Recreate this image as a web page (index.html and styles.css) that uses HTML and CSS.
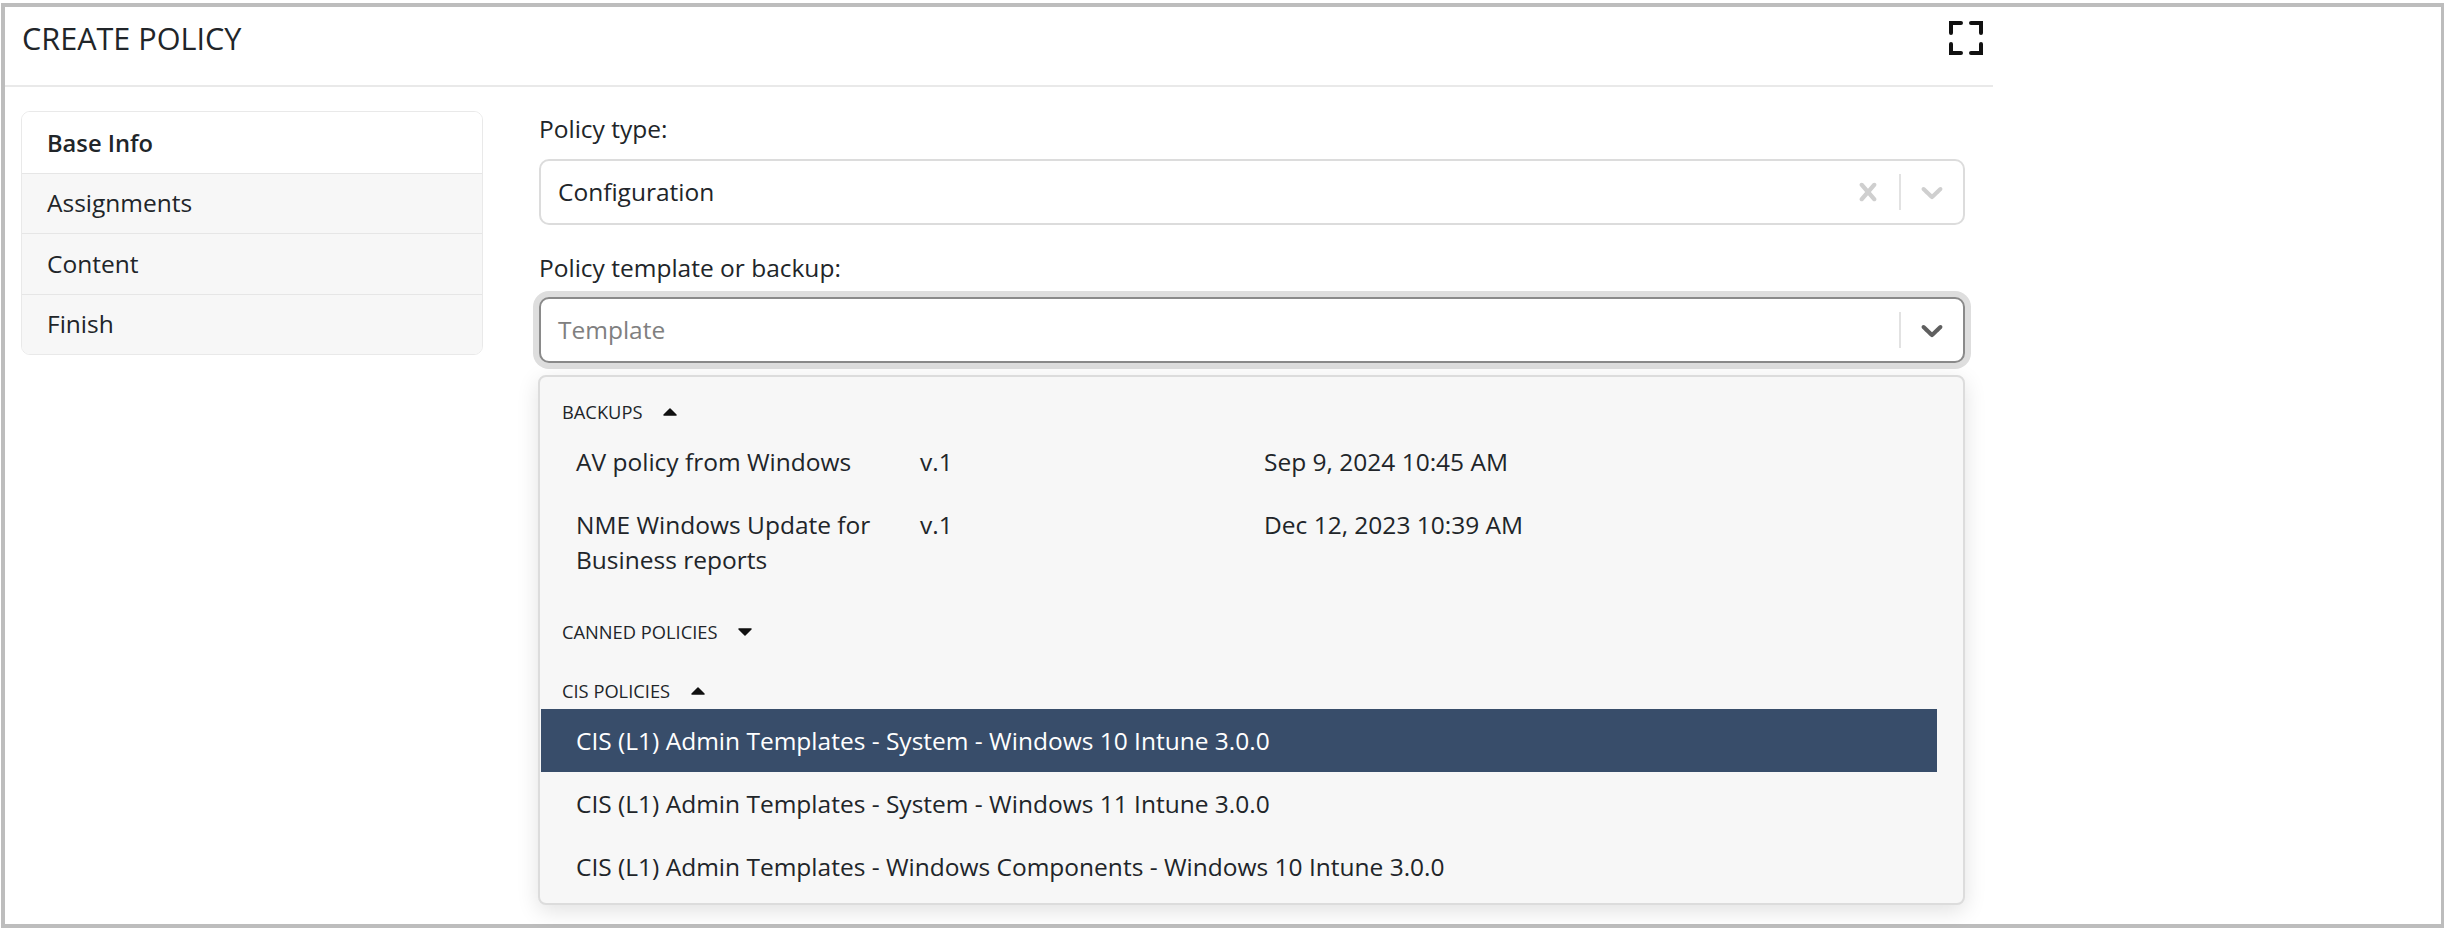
FILE: index.html
```html
<!DOCTYPE html>
<html lang="en">
<head>
<meta charset="utf-8">
<title>Create Policy</title>
<link rel="stylesheet" href="styles.css">
</head>
<body>
<div class="frame">
  <div class="modal">
    <header class="modal-head">
      <h1 class="modal-title">CREATE POLICY</h1>
      <svg class="fullscreen" viewBox="0 0 34 34" aria-hidden="true"><path d="M2 12V2H12M22 2H32V12M2 23V32H12M32 23V32H22"/></svg>
    </header>
    <div class="modal-body">
      <nav class="steps">
        <div class="step step-active">Base Info</div>
        <div class="step">Assignments</div>
        <div class="step">Content</div>
        <div class="step">Finish</div>
      </nav>
      <main class="form">
        <label class="label label-first">Policy type:</label>
        <div class="select">
          <span class="select-value">Configuration</span>
          <svg class="icon icon-muted icon-clear" viewBox="0 0 20 20" aria-hidden="true"><path d="M14.348 14.849c-0.469 0.469-1.229 0.469-1.697 0l-2.651-3.03-2.651 3.029c-0.469 0.469-1.229 0.469-1.697 0-0.469-0.469-0.469-1.229 0-1.697l2.758-3.15-2.759-3.152c-0.469-0.469-0.469-1.228 0-1.697s1.228-0.469 1.697 0l2.652 3.031 2.651-3.031c0.469-0.469 1.228-0.469 1.697 0s0.469 1.229 0 1.697l-2.758 3.152 2.758 3.15c0.469 0.469 0.469 1.229 0 1.698z"/></svg>
          <span class="sep"></span>
          <svg class="icon icon-muted icon-chevron" viewBox="0 0 20 20" aria-hidden="true"><path d="M4.516 7.548c0.436-0.446 1.043-0.481 1.576 0l3.908 3.747 3.908-3.747c0.533-0.481 1.141-0.446 1.574 0 0.436 0.445 0.408 1.197 0 1.615-0.406 0.418-4.695 4.502-4.695 4.502-0.217 0.223-0.502 0.335-0.787 0.335s-0.57-0.112-0.789-0.335c0 0-4.287-4.084-4.695-4.502s-0.436-1.17 0-1.615z"/></svg>
        </div>
        <label class="label label-second">Policy template or backup:</label>
        <div class="select select-focus">
          <span class="select-value select-placeholder">Template</span>
          <span class="sep"></span>
          <svg class="icon icon-dark icon-chevron" viewBox="0 0 20 20" aria-hidden="true"><path d="M4.516 7.548c0.436-0.446 1.043-0.481 1.576 0l3.908 3.747 3.908-3.747c0.533-0.481 1.141-0.446 1.574 0 0.436 0.445 0.408 1.197 0 1.615-0.406 0.418-4.695 4.502-4.695 4.502-0.217 0.223-0.502 0.335-0.787 0.335s-0.57-0.112-0.789-0.335c0 0-4.287-4.084-4.695-4.502s-0.436-1.17 0-1.615z"/></svg>
        </div>
        <div class="menu">
          <div class="group group-backups">
            <span>BACKUPS</span>
            <svg class="caret" viewBox="0 0 14 8" aria-hidden="true"><path d="M7 1L13 7H1Z"/></svg>
          </div>
          <div class="option option-grid"><span>AV policy from Windows</span><span>v.1</span><span>Sep 9, 2024 10:45 AM</span></div>
          <div class="option option-grid option-tall"><span>NME Windows Update for Business reports</span><span>v.1</span><span>Dec 12, 2023 10:39 AM</span></div>
          <div class="group group-canned">
            <span>CANNED POLICIES</span>
            <svg class="caret" viewBox="0 0 14 8" aria-hidden="true"><path d="M7 7L13 1H1Z"/></svg>
          </div>
          <div class="group group-cis">
            <span>CIS POLICIES</span>
            <svg class="caret" viewBox="0 0 14 8" aria-hidden="true"><path d="M7 1L13 7H1Z"/></svg>
          </div>
          <div class="option option-selected">CIS (L1) Admin Templates - System - Windows 10 Intune 3.0.0</div>
          <div class="option">CIS (L1) Admin Templates - System - Windows 11 Intune 3.0.0</div>
          <div class="option">CIS (L1) Admin Templates - Windows Components - Windows 10 Intune 3.0.0</div>
        </div>
      </main>
    </div>
  </div>
</div>
</body>
</html>
```
FILE: styles.css
```css
* { box-sizing: border-box; }
html, body { margin: 0; padding: 0; background: #fff; }
body {
  font-family: "Open Sans", "Liberation Sans", sans-serif;
  font-size: 24.5px;
  line-height: 36px;
  color: #212529;
  overflow: hidden;
}
.frame {
  width: 2444px;
  height: 925px;
  margin: 3px 0 0 1px;
  border: 4px solid #bdbdbd;
  background: #fff;
}
.modal { width: 1988px; }
.modal-head {
  height: 80px;
  padding: 0 10px 0 17px;
  border-bottom: 2px solid #e9e9e9;
  display: flex;
  justify-content: space-between;
  align-items: flex-start;
}
.modal-title {
  margin: 0;
  padding-top: 11px;
  font-size: 30.6px;
  line-height: 40px;
  font-weight: 400;
}
.fullscreen {
  width: 34px;
  height: 34px;
  margin-top: 14px;
  fill: none;
  stroke: #111;
  stroke-width: 4;
  stroke-linecap: round;
  stroke-linejoin: miter;
}
.modal-body {
  display: flex;
  align-items: flex-start;
  padding: 24px 0 0 16px;
}
.steps {
  width: 462px;
  flex: none;
  border: 1px solid #e9e9e9;
  border-radius: 9px;
  overflow: hidden;
}
.step {
  height: 60.5px;
  padding-left: 25px;
  display: flex;
  align-items: center;
  background: #f7f7f7;
  border-top: 1px solid #e6e6e6;
}
.step-active {
  background: #fff;
  border-top: 0;
  padding-top: 2px;
  font-size: 23.7px;
  font-weight: 600;
}
.form {
  width: 1426px;
  margin-left: 56px;
  flex: none;
}
.label { display: block; }
.label-first { margin-bottom: 12px; }
.label-second { margin-top: 25px; margin-bottom: 11px; }
.select {
  height: 66px;
  border: 2px solid #dcdcdc;
  border-radius: 10px;
  display: flex;
  align-items: center;
  background: #fff;
}
.select-focus {
  border-color: #8a8a8a;
  box-shadow: 0 0 0 6px #dedede;
}
.select-value { flex: 1; padding-left: 17px; }
.select-placeholder { color: #808080; }
.sep {
  width: 2px;
  height: 36px;
  background: #e2e2e2;
}
.icon { width: 36px; height: 36px; flex: none; }
.icon-muted { fill: #cfcfcf; }
.icon-dark { fill: #5f5f5f; }
.icon-clear { margin-right: 13px; }
.icon-chevron { margin: 0 13px; }
.menu {
  margin-top: 12px;
  margin-left: -1px;
  height: 530px;
  padding-right: 26px;
  background: #f7f7f7;
  border: 2px solid #dcdcdc;
  border-radius: 8px;
  box-shadow: 0 6px 22px rgba(0, 0, 0, 0.12);
}
.group {
  display: flex;
  align-items: center;
  gap: 21px;
  padding-left: 22px;
  font-size: 18.3px;
  line-height: 34px;
}
.group-backups { padding-top: 18px; padding-bottom: 2px; }
.group-canned { padding-top: 21px; padding-bottom: 1px; }
.group-cis { padding-top: 24px; padding-bottom: 1px; }
.caret {
  width: 14px;
  height: 8px;
  fill: #111;
  stroke: #111;
  stroke-width: 1.5;
  stroke-linejoin: round;
}
.option { margin-left: 1px; padding: 13.5px 35px; }
.option-grid {
  display: grid;
  grid-template-columns: 344px 344px 1fr;
  padding: 12.5px 0 14.5px 35px;
}
.option-tall { line-height: 35.5px; padding-bottom: 16.5px; }
.option-grid span:first-child { padding-right: 30px; }
.option-selected {
  background: #384d6a;
  color: #fff;
}
```
